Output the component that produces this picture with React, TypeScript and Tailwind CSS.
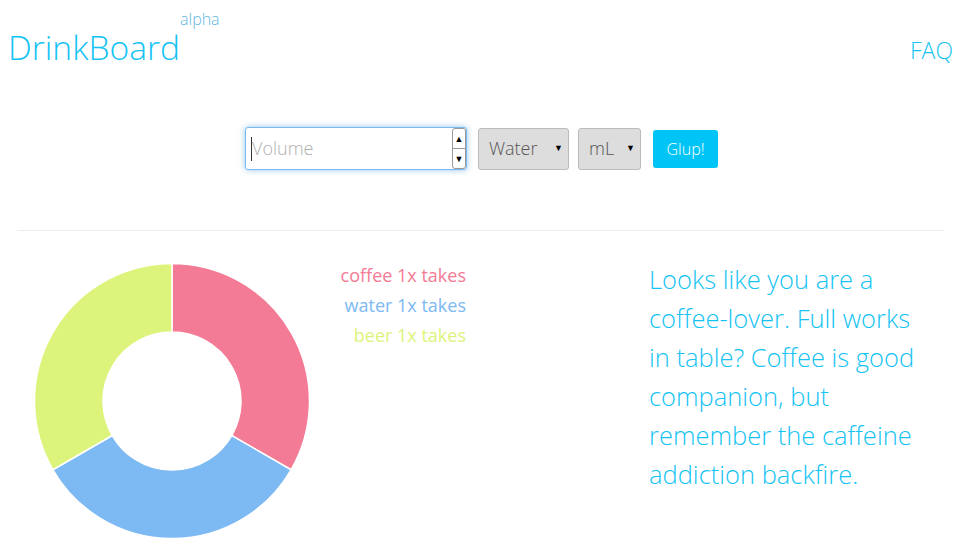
import React from "react";

const brand = "#14c3f4";

const slices = [
  { label: "coffee", color: "#f47b95", from: -90, to: 30 },
  { label: "water", color: "#7db9f3", from: 30, to: 150 },
  { label: "beer", color: "#dcf47b", from: 150, to: 270 },
];

function arcPath(cx: number, cy: number, ro: number, ri: number, a0: number, a1: number): string {
  const r = (d: number) => (d * Math.PI) / 180;
  const p = (rad: number, a: number) => [cx + rad * Math.cos(r(a)), cy + rad * Math.sin(r(a))];
  const [x0, y0] = p(ro, a0);
  const [x1, y1] = p(ro, a1);
  const [x2, y2] = p(ri, a1);
  const [x3, y3] = p(ri, a0);
  const large = a1 - a0 > 180 ? 1 : 0;
  return `M${x0} ${y0} A${ro} ${ro} 0 ${large} 1 ${x1} ${y1} L${x2} ${y2} A${ri} ${ri} 0 ${large} 0 ${x3} ${y3} Z`;
}

function Donut() {
  return (
    <svg width="278" height="278" viewBox="0 0 278 278" className="block">
      {slices.map((s) => (
        <path key={s.label} d={arcPath(139, 139, 137.5, 69, s.from, s.to)} fill={s.color} stroke="#fff" strokeWidth="1.5" />
      ))}
    </svg>
  );
}

export default function App() {
  return (
    <div className="min-h-[551px] bg-white" style={{ fontFamily: '"Open Sans", "Noto Sans", sans-serif' }}>
      <header className="flex items-start justify-between pl-2 pr-2">
        <div className="flex items-start font-light">
          <span className="mt-[24px] text-[33.6px] leading-[46px] text-[#14c3f4]">DrinkBoard</span>
          <span className="mt-[8px] text-[16px] leading-[22px] text-[#5fb8e0]">alpha</span>
        </div>
        <a className="mt-[35px] text-[23px] font-light leading-[31px] text-[#14c3f4]">FAQ</a>
      </header>

      <form className="mt-[57px] flex items-center justify-center pl-[2px]" onSubmit={(e) => e.preventDefault()}>
        <div className="flex h-[43px] w-[222px] items-stretch rounded-[3px] border border-[#7cb9f3] bg-white shadow-[0_0_6px_rgba(102,175,233,0.7)]">
          <div className="flex flex-1 items-center pl-[5px]">
            <span className="h-[24px] w-px bg-[#333]" />
            <input
              type="text"
              placeholder="Volume"
              className="w-full bg-transparent text-[18px] font-light text-[#555] outline-none placeholder:text-[#b0b0b0]"
            />
          </div>
          <div className="flex w-[14px] flex-col overflow-hidden rounded-[3px] border border-[#999]">
            <span className="flex flex-1 items-center justify-center border-b border-[#999] text-[9px] leading-none text-black">▲</span>
            <span className="flex flex-1 items-center justify-center text-[9px] leading-none text-black">▼</span>
          </div>
        </div>
        <div className="relative ml-[11px]">
          <select className="h-[42px] w-[91px] appearance-none rounded-[3px] border border-[#bbb] bg-[#ddd] pl-[10px] text-[18px] font-light text-[#555] outline-none">
            <option>Water</option>
            <option>Coffee</option>
            <option>Beer</option>
          </select>
          <span className="pointer-events-none absolute right-[6px] top-[15px] text-[9px] leading-none text-black">▼</span>
        </div>
        <div className="relative ml-[9px]">
          <select className="h-[42px] w-[63px] appearance-none rounded-[3px] border border-[#bbb] bg-[#ddd] pl-[10px] text-[18px] font-light text-[#555] outline-none">
            <option>mL</option>
            <option>L</option>
          </select>
          <span className="pointer-events-none absolute right-[6px] top-[15px] text-[9px] leading-none text-black">▼</span>
        </div>
        <button type="submit" className="ml-[12px] h-[38px] w-[65px] rounded-[3px] bg-[#00c4f6] text-[16px] font-light text-white">
          Glup!
        </button>
      </form>

      <hr className="mx-[17px] mt-[60px] border-t border-[#eee]" />

      <section className="flex items-start pt-[31px]">
        <div className="ml-[33px]">
          <Donut />
        </div>
        <ul className="ml-[17px] mt-[-2px] w-[138px] text-right text-[18px] font-normal leading-[30px]">
          {slices.map((s) => (
            <li key={s.label} style={{ color: s.color }}>
              {s.label} 1x takes
            </li>
          ))}
        </ul>
        <p className="ml-[183px] mt-[-2px] w-[285px] text-[25.5px] font-light leading-[39px]" style={{ color: brand }}>
          Looks like you are a coffee-lover. Full works in table? Coffee is good companion, but remember the caffeine addiction backfire.
        </p>
      </section>
    </div>
  );
}
